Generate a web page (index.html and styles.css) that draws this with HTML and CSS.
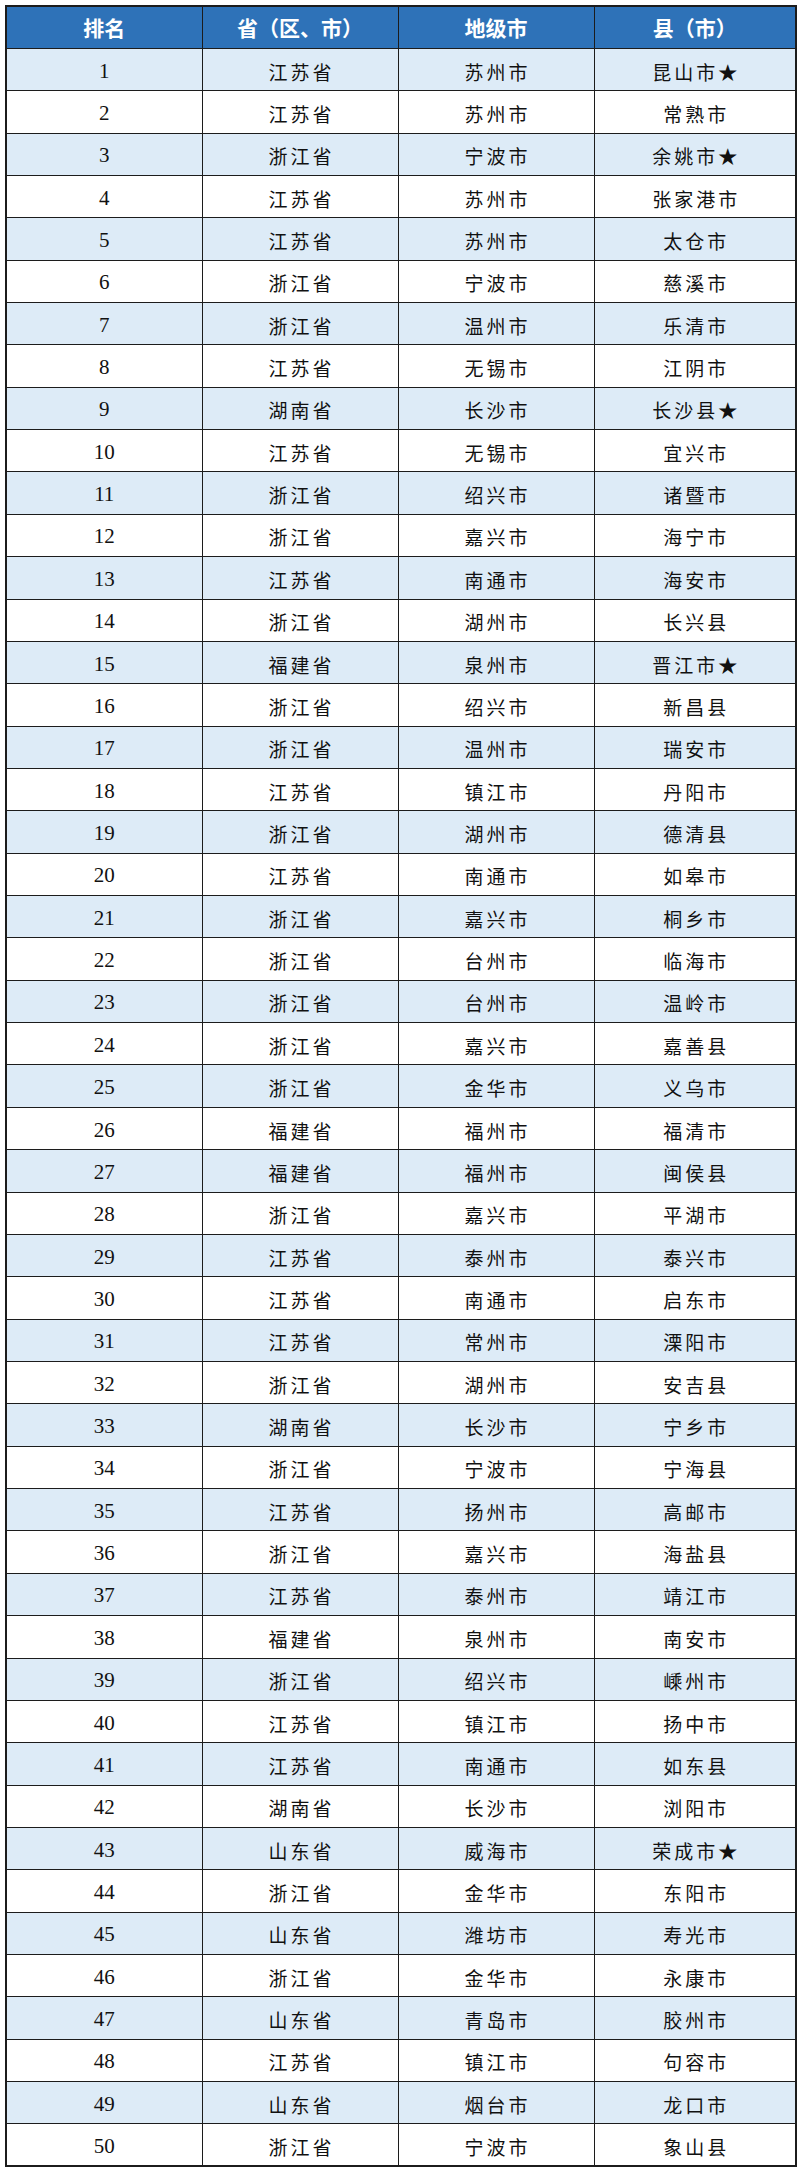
FILE: index.html
```html
<!DOCTYPE html>
<html lang="zh-CN">
<head>
<meta charset="utf-8">
<title>县域排名</title>
<link rel="stylesheet" href="styles.css">
</head>
<body>
<table class="rank">
<colgroup><col class="c1"><col class="c2"><col class="c3"><col class="c4"></colgroup>
<thead>
<tr><th>排名</th><th>省（区、市）</th><th>地级市</th><th>县（市）</th></tr>
</thead>
<tbody>
<tr><td class="n">1</td><td>江苏省</td><td>苏州市</td><td>昆山市★</td></tr>
<tr><td class="n">2</td><td>江苏省</td><td>苏州市</td><td>常熟市</td></tr>
<tr><td class="n">3</td><td>浙江省</td><td>宁波市</td><td>余姚市★</td></tr>
<tr><td class="n">4</td><td>江苏省</td><td>苏州市</td><td>张家港市</td></tr>
<tr><td class="n">5</td><td>江苏省</td><td>苏州市</td><td>太仓市</td></tr>
<tr><td class="n">6</td><td>浙江省</td><td>宁波市</td><td>慈溪市</td></tr>
<tr><td class="n">7</td><td>浙江省</td><td>温州市</td><td>乐清市</td></tr>
<tr><td class="n">8</td><td>江苏省</td><td>无锡市</td><td>江阴市</td></tr>
<tr><td class="n">9</td><td>湖南省</td><td>长沙市</td><td>长沙县★</td></tr>
<tr><td class="n">10</td><td>江苏省</td><td>无锡市</td><td>宜兴市</td></tr>
<tr><td class="n">11</td><td>浙江省</td><td>绍兴市</td><td>诸暨市</td></tr>
<tr><td class="n">12</td><td>浙江省</td><td>嘉兴市</td><td>海宁市</td></tr>
<tr><td class="n">13</td><td>江苏省</td><td>南通市</td><td>海安市</td></tr>
<tr><td class="n">14</td><td>浙江省</td><td>湖州市</td><td>长兴县</td></tr>
<tr><td class="n">15</td><td>福建省</td><td>泉州市</td><td>晋江市★</td></tr>
<tr><td class="n">16</td><td>浙江省</td><td>绍兴市</td><td>新昌县</td></tr>
<tr><td class="n">17</td><td>浙江省</td><td>温州市</td><td>瑞安市</td></tr>
<tr><td class="n">18</td><td>江苏省</td><td>镇江市</td><td>丹阳市</td></tr>
<tr><td class="n">19</td><td>浙江省</td><td>湖州市</td><td>德清县</td></tr>
<tr><td class="n">20</td><td>江苏省</td><td>南通市</td><td>如皋市</td></tr>
<tr><td class="n">21</td><td>浙江省</td><td>嘉兴市</td><td>桐乡市</td></tr>
<tr><td class="n">22</td><td>浙江省</td><td>台州市</td><td>临海市</td></tr>
<tr><td class="n">23</td><td>浙江省</td><td>台州市</td><td>温岭市</td></tr>
<tr><td class="n">24</td><td>浙江省</td><td>嘉兴市</td><td>嘉善县</td></tr>
<tr><td class="n">25</td><td>浙江省</td><td>金华市</td><td>义乌市</td></tr>
<tr><td class="n">26</td><td>福建省</td><td>福州市</td><td>福清市</td></tr>
<tr><td class="n">27</td><td>福建省</td><td>福州市</td><td>闽侯县</td></tr>
<tr><td class="n">28</td><td>浙江省</td><td>嘉兴市</td><td>平湖市</td></tr>
<tr><td class="n">29</td><td>江苏省</td><td>泰州市</td><td>泰兴市</td></tr>
<tr><td class="n">30</td><td>江苏省</td><td>南通市</td><td>启东市</td></tr>
<tr><td class="n">31</td><td>江苏省</td><td>常州市</td><td>溧阳市</td></tr>
<tr><td class="n">32</td><td>浙江省</td><td>湖州市</td><td>安吉县</td></tr>
<tr><td class="n">33</td><td>湖南省</td><td>长沙市</td><td>宁乡市</td></tr>
<tr><td class="n">34</td><td>浙江省</td><td>宁波市</td><td>宁海县</td></tr>
<tr><td class="n">35</td><td>江苏省</td><td>扬州市</td><td>高邮市</td></tr>
<tr><td class="n">36</td><td>浙江省</td><td>嘉兴市</td><td>海盐县</td></tr>
<tr><td class="n">37</td><td>江苏省</td><td>泰州市</td><td>靖江市</td></tr>
<tr><td class="n">38</td><td>福建省</td><td>泉州市</td><td>南安市</td></tr>
<tr><td class="n">39</td><td>浙江省</td><td>绍兴市</td><td>嵊州市</td></tr>
<tr><td class="n">40</td><td>江苏省</td><td>镇江市</td><td>扬中市</td></tr>
<tr><td class="n">41</td><td>江苏省</td><td>南通市</td><td>如东县</td></tr>
<tr><td class="n">42</td><td>湖南省</td><td>长沙市</td><td>浏阳市</td></tr>
<tr><td class="n">43</td><td>山东省</td><td>威海市</td><td>荣成市★</td></tr>
<tr><td class="n">44</td><td>浙江省</td><td>金华市</td><td>东阳市</td></tr>
<tr><td class="n">45</td><td>山东省</td><td>潍坊市</td><td>寿光市</td></tr>
<tr><td class="n">46</td><td>浙江省</td><td>金华市</td><td>永康市</td></tr>
<tr><td class="n">47</td><td>山东省</td><td>青岛市</td><td>胶州市</td></tr>
<tr><td class="n">48</td><td>江苏省</td><td>镇江市</td><td>句容市</td></tr>
<tr><td class="n">49</td><td>山东省</td><td>烟台市</td><td>龙口市</td></tr>
<tr><td class="n">50</td><td>浙江省</td><td>宁波市</td><td>象山县</td></tr>
</tbody>
</table>
</body>
</html>
```
FILE: styles.css
```css
html, body {
  margin: 0;
  padding: 0;
  background: #ffffff;
}
body {
  padding: 5px 5px 0 5px;
  font-family: "Noto Sans CJK SC", sans-serif;
}
.rank {
  width: 790px;
  border-collapse: collapse;
  table-layout: fixed;
  border: 2px solid #1c1c1c;
}
.c1 { width: 196px; }
.c2 { width: 196px; }
.c3 { width: 196px; }
.c4 { width: 202px; }
.rank th,
.rank td {
  height: 42.37px;
  padding: 0;
  text-align: center;
  vertical-align: middle;
  border: 1px solid #1c1c1c;
  box-sizing: border-box;
}
.rank th {
  background: #2e72b8;
  color: #ffffff;
  font-size: 21px;
  font-weight: 700;
  line-height: 1;
}
.rank td {
  color: #111111;
  font-size: 19px;
  font-weight: 400;
  letter-spacing: 3px;
  text-indent: 3px;
  line-height: 1;
  padding-top: 3px;
}
.rank td.n {
  font-family: "Liberation Serif", serif;
  font-size: 21px;
  letter-spacing: 0;
  text-indent: 0;
}
.rank tbody tr:nth-child(odd) td {
  background: #ddebf7;
}
```
